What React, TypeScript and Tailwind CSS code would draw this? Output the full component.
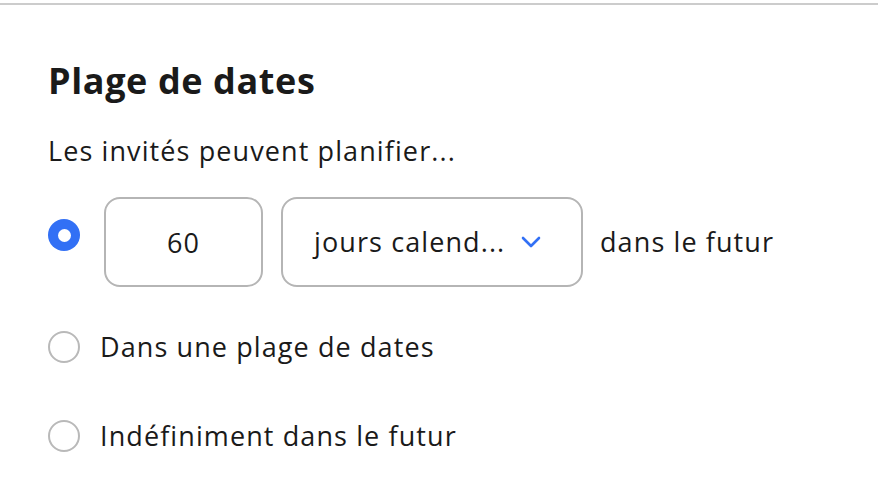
import { useState } from "react";

type Mode = "rolling" | "range" | "indefinite";

function Radio({ checked, onClick }: { checked: boolean; onClick: () => void }) {
  return (
    <button
      type="button"
      onClick={onClick}
      className={
        checked
          ? "w-8 h-8 shrink-0 rounded-full bg-[#3270f5] flex items-center justify-center"
          : "w-8 h-8 shrink-0 rounded-full border-2 border-[#b9b9b9] bg-white"
      }
    >
      {checked && <span className="w-[13px] h-[13px] rounded-full bg-white" />}
    </button>
  );
}

export default function App() {
  const [mode, setMode] = useState<Mode>("rolling");
  const [days, setDays] = useState("60");

  return (
    <div
      className="w-[878px] h-[482px] bg-white text-[#1a1a1a] overflow-hidden"
      style={{ fontFamily: "'Open Sans', 'Liberation Sans', sans-serif" }}
    >
      <div className="mt-[3px] h-[2px] bg-[#cccccc]" />

      <div className="pl-12 pt-[52px] text-[27px] tracking-[1.1px]">
        <h2 className="text-[36px] leading-[48px] font-bold tracking-[0.6px]">Plage de dates</h2>
        <p className="mt-[28px] leading-[36px]">Les invités peuvent planifier...</p>

        {/* rolling window */}
        <div className="mt-[28px] flex items-center">
          <div className="h-[90px] flex items-start pt-[22px]">
            <Radio checked={mode === "rolling"} onClick={() => setMode("rolling")} />
          </div>
          <input
            value={days}
            onChange={(e) => setDays(e.target.value)}
            className="ml-6 w-[159px] h-[90px] rounded-[16px] border-2 border-[#b5b5b5] text-center outline-none"
          />
          <button
            type="button"
            className="ml-[18px] w-[302px] h-[90px] rounded-[16px] border-2 border-[#b5b5b5] flex items-center pl-[31px]"
          >
            <span>jours calend...</span>
            <svg width="20" height="12" viewBox="0 0 20 12" className="ml-[16px]" fill="none">
              <path d="M2 2l8 8 8-8" stroke="#3270f5" strokeWidth="2.6" strokeLinecap="round" strokeLinejoin="round" />
            </svg>
          </button>
          <span className="ml-[17px]">dans le futur</span>
        </div>

        <div className="mt-[40px] flex items-center gap-[20px]">
          <Radio checked={mode === "range"} onClick={() => setMode("range")} />
          <span>Dans une plage de dates</span>
        </div>

        <div className="mt-[48px] flex items-center gap-[20px]">
          <Radio checked={mode === "indefinite"} onClick={() => setMode("indefinite")} />
          <span>Indéfiniment dans le futur</span>
        </div>
      </div>
    </div>
  );
}
